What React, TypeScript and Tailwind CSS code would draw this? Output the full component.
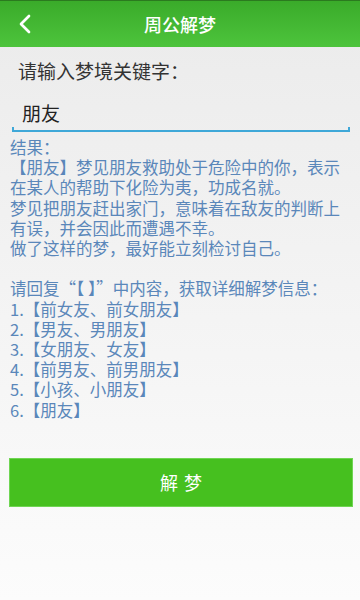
import { ChevronLeft } from 'lucide-react';

const font = { fontFamily: '"Noto Sans CJK SC", "Noto Sans", sans-serif' };

const options = ['前女友、前女朋友', '男友、男朋友', '女朋友、女友', '前男友、前男朋友', '小孩、小朋友', '朋友'];

export default function App() {
  return (
    <div className="w-[360px] h-[600px] flex flex-col bg-gradient-to-b from-[#ebebeb] to-[#fcfcfc] overflow-hidden" style={font}>
      <div className="h-[47px] shrink-0 flex items-center relative bg-gradient-to-b from-[#3aab2a] to-[#4dc43c] border-t border-[#2b7a1f]">
        <ChevronLeft className="absolute left-[9px] top-[7px] w-[32px] h-[32px] text-white" strokeWidth={2} />
        <h1 className="flex-1 text-center text-white text-[18px] font-medium">周公解梦</h1>
      </div>

      <div className="pl-[18px] mt-[11px] text-[19px] leading-[26px] text-[#333]">请输入梦境关键字：</div>

      <div className="mx-[12px] mr-[10px] mt-[16px]">
        <div className="pl-[10px] text-[19px] leading-[26px] text-[#222]">朋友</div>
        <div className="h-[5px] mt-[1px] border-x-2 border-b-2 border-[#3fa8d8]" />
      </div>

      <div className="px-[10px] pr-[8px] mt-[5px] text-[16.5px] leading-[20.2px] text-[#5a87ba]">
        <p>结果：</p>
        <p>【朋友】梦见朋友救助处于危险中的你，表示在某人的帮助下化险为夷，功成名就。</p>
        <p>梦见把朋友赶出家门，意味着在敌友的判断上有误，并会因此而遭遇不幸。</p>
        <p>做了这样的梦，最好能立刻检讨自己。</p>
        <p className="h-[20.2px]" />
        <p>请回复“【 】”中内容，获取详细解梦信息：</p>
        {options.map((o, i) => (
          <p key={i}>{i + 1}.【{o}】</p>
        ))}
      </div>

      <button className="mt-[38px] ml-[9px] mr-[7px] h-[49px] shrink-0 bg-[#46c01f] border border-[#6fd553] text-white text-[18px] tracking-[6px] pl-[6px]">
        解梦
      </button>
    </div>
  );
}
